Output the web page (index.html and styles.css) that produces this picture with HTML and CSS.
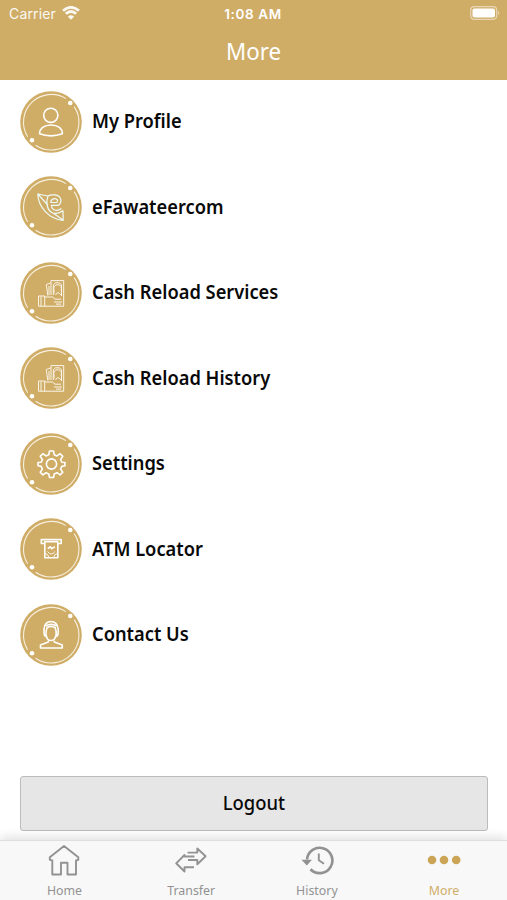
FILE: index.html
```html
<!DOCTYPE html>
<html lang="en">
<head>
<meta charset="utf-8">
<meta name="viewport" content="width=device-width">
<title>More</title>
<link rel="stylesheet" href="styles.css">
</head>
<body>
<svg class="defs" aria-hidden="true">
  <symbol id="ring" viewBox="0 0 62 62">
    <circle class="disc" cx="31" cy="31" r="30.8"/>
    <path class="arc" d="M46 7.6A27.8 27.8 0 0 0 7.6 45.7M54.2 15.6A27.8 27.8 0 0 1 15.6 54.2"/>
    <circle class="dot" cx="50.3" cy="12" r="2.3"/>
    <circle class="dot" cx="12" cy="49.3" r="2.3"/>
  </symbol>
  <symbol id="cash" viewBox="0 0 62 62">
    <path class="thin" d="M31 33V18.6H43.7V44.2H18.5V34H24.7V44.2M21 34.5V44M24.7 35H32.5L35 37.2H41M27.8 33.5L26.3 22.5L31 20.8M29 24V33M33.3 33V23L35.3 20.8H39.5L41.5 23V34M34 31.5V28A3.9 3.9 0 1 1 41 28.5M35.5 33Q37.5 28.5 41 33M34 40H42M36 42.1H41"/>
  </symbol>
</svg>
<div class="screen">
  <header class="header">
    <div class="status">
      <div class="carrier"><span>Carrier</span>
        <svg class="wifi" viewBox="0 0 18 14"><path d="M1 4.8Q9-2.2 17 4.8M3.8 7.8Q9 3.2 14.2 7.8"/><path class="solid" d="M9 13.7L5.8 10.5Q9 7.8 12.2 10.5Z"/></svg>
      </div>
      <div class="time">1:08 AM</div>
      <svg class="battery" viewBox="0 0 30 15"><rect class="shell" x=".7" y=".7" width="26" height="12.6" rx="3.5"/><rect class="charge" x="2.5" y="2.5" width="22.5" height="9" rx="2"/><path class="cap" d="M28 5Q30.5 7 28 9Z"/></svg>
    </div>
    <h1 class="title">More</h1>
  </header>
  <main class="content">
    <ul class="menu">
      <li class="item"><svg class="icon" viewBox="0 0 62 62"><use href="#ring"/><circle class="line" cx="30.8" cy="24.3" r="7.1"/><path class="line" d="M19.6 42.8C19.6 37.5 24 34 31 34S42.4 37.5 42.4 42.8Q37 44.9 31 44.9T19.6 42.8Z"/></svg><span class="label">My Profile</span></li>
      <li class="item"><svg class="icon" viewBox="0 0 62 62"><use href="#ring"/><path class="leaf" d="M28 20L17.8 18C18.2 31 29 43 43.2 44.3L43 34.5M17.8 18L27.8 29M33 37L43 44M28 20C31 18 38 18.5 40 21.5C42 25 40.5 27.5 38.5 29.3H31.5C31.5 34 36.5 36 41.5 32.5M37 23.5C34 21 30.5 24 30.8 26.5H36.5Q38.3 25 37 23.5M28 20C25.5 26 27 35 33 37Q38.5 38.5 43 34.5"/></svg><span class="label">eFawateercom</span></li>
      <li class="item"><svg class="icon" viewBox="0 0 62 62"><use href="#ring"/><use href="#cash"/></svg><span class="label">Cash Reload Services</span></li>
      <li class="item"><svg class="icon" viewBox="0 0 62 62"><use href="#ring"/><use href="#cash"/></svg><span class="label">Cash Reload History</span></li>
      <li class="item"><svg class="icon" viewBox="0 0 62 62"><use href="#ring"/><circle class="line" cx="31.5" cy="31" r="5.1"/><path class="line" d="M29.5 18H33.5L34.2 21.7L37 22.9L40.1 20.7L42.8 23.4L40.6 26.5L41.8 29.2L45 29.5V32.7L41.8 33.4L40.6 36.1L42.8 39.2L40.1 41.9L37 39.7L34.2 40.9L33.5 44.5H29.5L28.8 40.9L26 39.7L22.9 41.9L20.2 39.2L22.4 36.1L21.2 33.4L18 32.7V29.5L21.2 29.2L22.4 26.5L20.2 23.4L22.9 20.7L26 22.9L28.8 21.7Z"/></svg><span class="label">Settings</span></li>
      <li class="item"><svg class="icon" viewBox="0 0 62 62"><use href="#ring"/><path class="line" d="M24 25.5H21.3V21.6H41.2V25.5H38.5M24.8 23.8V39.8H37.8V23.8Z"/><path class="thin" d="M25 35.5Q28.5 36 28.8 39.5M37.5 35.5Q34 36 33.7 39.5M27.5 33.5Q31.2 38.5 35 33.5"/><path class="line" d="M27.8 30.5L30.2 28.8L31.8 30.6L34.8 28.8"/></svg><span class="label">ATM Locator</span></li>
      <li class="item"><svg class="icon" viewBox="0 0 62 62"><use href="#ring"/><path class="line" d="M27.5 35C25.7 32 25.9 27 27 23.8Q31 21 35.2 23.8C36.3 27 36.5 32 34.5 35Q31 38 27.5 35ZM25.5 32.5Q23.8 31.5 24 27V25C24.5 20 27.5 17.5 31 17.5S37.5 20 38.2 25V28Q38.3 31.5 36.5 32.5M28.3 36.5V38L20.5 41V44H42.3V41L34.3 38V36.5M26 22Q31 18.5 36.5 22"/></svg><span class="label">Contact Us</span></li>
    </ul>
    <button class="logout"><span>Logout</span></button>
  </main>
  <nav class="tabs">
    <a class="tab"><svg class="tabicon" viewBox="0 0 34 32"><path d="M17 2L31.3 13.2V15.8L29 16.5V30.5H20.5V18.7H14V30.5H5.3V16.5L2.8 15.8V13.2Z"/></svg><span>Home</span></a>
    <a class="tab"><svg class="tabicon" viewBox="0 0 34 32"><path d="M13.5 8.6H23.3V4.5L31.6 12.2L23.3 20.3V16H14M20.5 12.5H10.5V11L2.2 19.3L10.5 27.5V23.2H20"/></svg><span>Transfer</span></a>
    <a class="tab"><svg class="tabicon" viewBox="0 0 34 32"><path class="bold" d="M7 15.5A12.7 12.7 0 1 1 10.5 25.3"/><path class="fill" d="M1.5 15.8H12L6.8 21.5Z"/><path d="M18.8 9.5V16.3L24 19.8"/></svg><span>History</span></a>
    <a class="tab active"><svg class="tabicon" viewBox="0 0 34 32"><circle cx="5" cy="16" r="4.3"/><circle cx="17" cy="16" r="4.3"/><circle cx="29.2" cy="16" r="4.3"/></svg><span>More</span></a>
  </nav>
</div>
</body>
</html>
```

FILE: styles.css
```css
* { box-sizing: border-box; }
body { margin: 0; background: #fff; color: #090909; font-family: "Noto Sans", sans-serif; }
.defs { position: absolute; width: 0; height: 0; }
.screen { display: flex; flex-direction: column; height: 900px; overflow: hidden; }
.header { height: 79.5px; background: #cfad67; color: #fff; }
.status { display: grid; grid-template-columns: 1fr auto 1fr; align-items: center; height: 27px; padding: 0 7px 0 9px; font: 14px Inter, sans-serif; }
.carrier { display: flex; align-items: center; gap: 6px; opacity: .92; letter-spacing: .15px; }
.wifi { width: 18px; height: 14px; fill: none; stroke: #fff; stroke-width: 2.7; margin-top: -1px; }
.wifi .solid { fill: #fff; stroke: none; }
.time { font-weight: 600; font-size: 13.5px; letter-spacing: .6px; margin-left: -3px; }
.battery { width: 30px; height: 15px; justify-self: end; }
.shell { fill: none; stroke: #e8d7b4; stroke-width: 1.2; }
.charge { fill: #fff; }
.cap { fill: #e8d7b4; }
.title { margin: 0; text-align: center; font-size: 23px; line-height: 48px; font-weight: 400; transform: scaleX(.97); }
.content { flex: 1; display: flex; flex-direction: column; justify-content: space-between; padding: 11.3px 19px 9px 20px; }
.menu { list-style: none; margin: 0; padding: 0; display: flex; flex-direction: column; gap: 23.5px; }
.item { display: flex; align-items: center; gap: 9.5px; height: 62px; }
.icon { width: 62px; height: 62px; flex: none; }
.disc { fill: #cfad67; }
.dot { fill: #fff; }
.arc { fill: none; stroke: #f7efdf; stroke-width: 1.1; }
.line { fill: none; stroke: #fff; stroke-width: 1.6; stroke-linejoin: round; }
.thin { fill: none; stroke: #fbf5e9; stroke-width: 1; }
.leaf { fill: none; stroke: #eefaf5; stroke-width: 1.2; stroke-linejoin: round; }
.label { font-size: 20px; line-height: 28px; font-weight: 600; white-space: nowrap; transform-origin: left; transform: scaleX(.914); margin-top: -1px; }
.logout { height: 55px; border: 1.5px solid #bcbcbc; border-radius: 3px; background: #e6e6e6; color: #090909; font: 500 20px "Noto Sans", sans-serif; padding: 0 0 2px; }
.logout span { display: inline-block; transform: scaleX(.92); }
.tabs { display: grid; grid-template-columns: repeat(4, 126.5px); height: 60px; background: #f8f8f8; border-top: 1px solid #dedede; box-shadow: 0 -3px 10px rgba(0,0,0,.12); }
.tab { display: flex; flex-direction: column; align-items: center; padding: 3px 0 0 2px; color: #929292; font-size: 13px; line-height: 18px; }
.tab span { margin-top: 5px; transform: scaleX(.95); }
.tabicon { width: 34px; height: 32px; fill: none; stroke: #929292; stroke-width: 1.9; stroke-linejoin: round; flex: none; }
.tabicon .bold { stroke-width: 2.7; }
.tabicon .fill { fill: #929292; stroke: none; }
.active { color: #cfad67; }
.active .tabicon { fill: #cba555; stroke: none; }
```
